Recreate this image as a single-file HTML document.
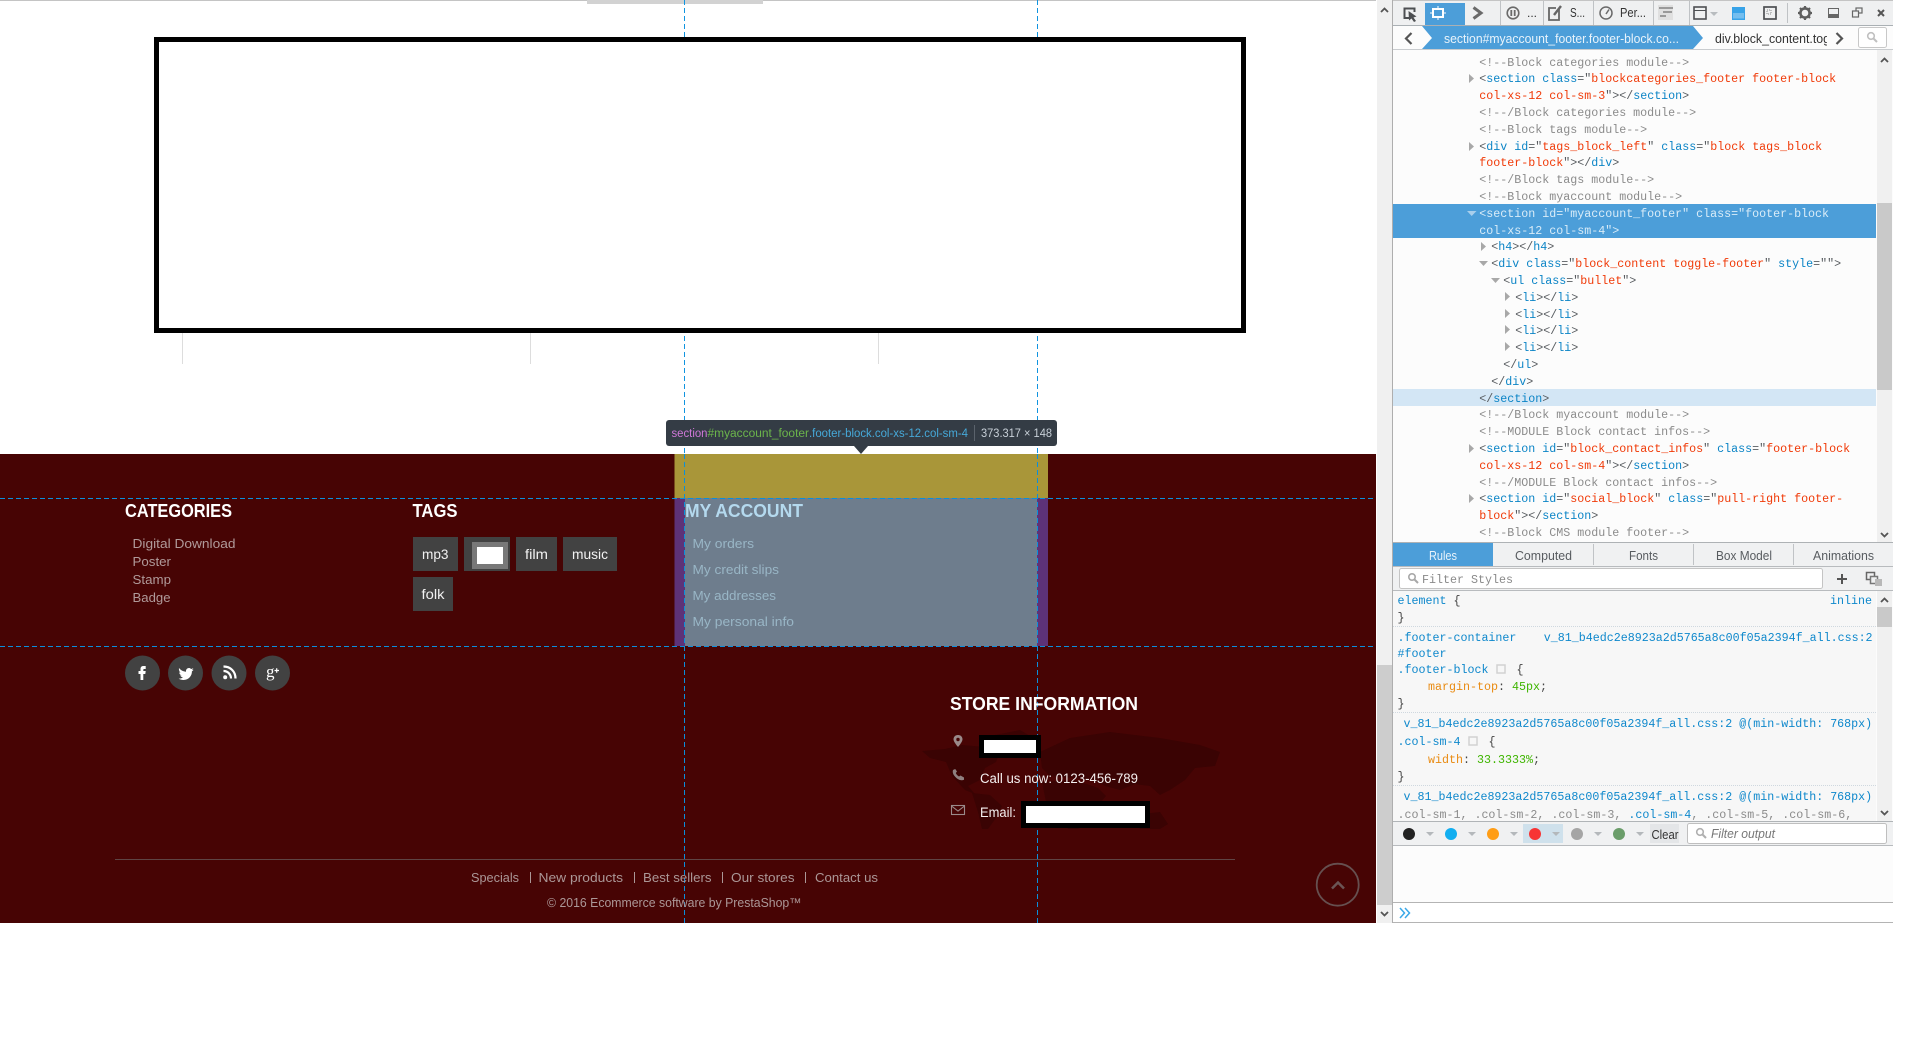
<!DOCTYPE html>
<html><head><meta charset="utf-8"><title>Footer inspect</title>
<style>
html,body{margin:0;padding:0;background:#fff;width:1920px;height:1040px;overflow:hidden}
svg{display:block}
text{white-space:pre}
.s{font-family:"Liberation Sans",sans-serif}
.m{font-family:"Liberation Mono",monospace;font-size:11.67px;fill:#585c60}
.c{fill:#8b8b8b}.t{fill:#0b84c6}.v{fill:#f03a08}.w{fill:#d9ecf8}
.sel{fill:#0e88cc}.p{fill:#e98b12}.g{fill:#3fb500}.d{fill:#444}.h{fill:#909090}
.tab{font-size:12.5px;fill:#585c60}
.cat{font-size:13px;fill:#b09a9a}
.acc{font-size:13px;fill:#99b6c6}
.hd{font-size:18px;font-weight:bold;fill:#fff}
.tag{font-size:13.5px;fill:#f2f2f2}
.foot{font-size:13px;fill:#ab9797}
</style></head><body>
<svg width="1920" height="1040" viewBox="0 0 1920 1040" xmlns="http://www.w3.org/2000/svg">
<defs>
<clipPath id="mk"><rect x="1393" y="50" width="483" height="492"/></clipPath>
<clipPath id="cr"><rect x="1700" y="27" width="127" height="22"/></clipPath>
<clipPath id="ru"><rect x="1393" y="591" width="483" height="230"/></clipPath>
</defs>
<rect width="1920" height="1040" fill="#fff"/>

<!-- PAGE -->
<rect x="0" y="0" width="1376" height="1" fill="#c4c4c4"/>
<rect x="587" y="0" width="176" height="4" fill="#d2d2d2"/>
<g stroke="#ddd" stroke-width="1"><path d="M182.500 333V364M530.500 333V364M878.500 333V364"/></g>
<path d="M684.500 0V454M1037.500 0V454" stroke="#1094e0" stroke-width="1" stroke-dasharray="5 3"/>
<rect x="156.500" y="39.500" width="1087" height="291" fill="#fff" stroke="#000" stroke-width="5"/>

<!-- FOOTER -->
<rect x="0" y="454" width="1376" height="469" fill="#470404"/>
<rect x="674.500" y="454" width="373.500" height="44" fill="#a99639"/>
<rect x="674.500" y="498" width="373.500" height="148" fill="#5d3278"/>
<rect x="685" y="498" width="352" height="148" fill="#6e7d8d"/>

<!-- world map -->
<g fill="#3a0303">
<path d="M922 751L945 749L962 745L985 747L1000 752L996 762L985 768L980 780L968 786L975 794L965 790L952 776L946 762L930 758Z"/>
<path d="M972 793L990 795L1002 806L996 818L988 829L982 829L978 812Z"/>
<path d="M995 735L1020 730L1030 736L1018 748L1004 750Z"/>
<path d="M1040 752L1070 738L1110 732L1160 738L1200 745L1220 752L1215 766L1195 768L1185 780L1170 790L1160 795L1150 786L1135 784L1120 790L1105 786L1098 782L1075 778L1050 776L1042 768Z"/>
<path d="M1042 782L1075 780L1098 788L1106 796L1096 808L1090 822L1078 829L1068 829L1062 810L1046 802Z"/>
<path d="M1135 815L1160 812L1168 824L1160 829L1140 829Z"/>
</g>

<path d="M0 498.500H1376M0 646.500H1376" stroke="#0a8fdc" stroke-width="1" stroke-dasharray="5 3"/>
<path d="M684.500 454V923M1037.500 454V923" stroke="#0a8fdc" stroke-width="1" stroke-dasharray="5 3"/>

<text class="s hd" x="125" y="517" textLength="107" lengthAdjust="spacingAndGlyphs">CATEGORIES</text>
<text class="s cat" x="132.500" y="548" textLength="103" lengthAdjust="spacingAndGlyphs">Digital Download</text>
<text class="s cat" x="132.500" y="566" textLength="38.500" lengthAdjust="spacingAndGlyphs">Poster</text>
<text class="s cat" x="132.500" y="584" textLength="38.500" lengthAdjust="spacingAndGlyphs">Stamp</text>
<text class="s cat" x="132.500" y="602" textLength="38" lengthAdjust="spacingAndGlyphs">Badge</text>

<text class="s hd" x="412.500" y="517" textLength="45" lengthAdjust="spacingAndGlyphs">TAGS</text>
<g fill="#424242">
<rect x="413" y="537" width="45" height="34"/>
<rect x="464" y="537" width="46" height="34"/>
<rect x="516" y="537" width="41" height="34"/>
<rect x="563" y="537" width="54" height="34"/>
<rect x="413" y="577" width="40" height="34"/>
</g>
<rect x="472" y="542" width="36" height="27" fill="#787878"/>
<rect x="477" y="547" width="26" height="17" fill="#fff"/>
<text class="s tag" x="422" y="559" textLength="26.500" lengthAdjust="spacingAndGlyphs">mp3</text>
<text class="s tag" x="525" y="559" textLength="23" lengthAdjust="spacingAndGlyphs">film</text>
<text class="s tag" x="572" y="559" textLength="36" lengthAdjust="spacingAndGlyphs">music</text>
<text class="s tag" x="421.500" y="599" textLength="23" lengthAdjust="spacingAndGlyphs">folk</text>

<text class="s hd" x="685" y="517" textLength="118" lengthAdjust="spacingAndGlyphs" style="fill:#b4d9ee">MY ACCOUNT</text>
<text class="s acc" x="692.500" y="548" textLength="61.500" lengthAdjust="spacingAndGlyphs">My orders</text>
<text class="s acc" x="692.500" y="574" textLength="86.500" lengthAdjust="spacingAndGlyphs">My credit slips</text>
<text class="s acc" x="692.500" y="600" textLength="83.500" lengthAdjust="spacingAndGlyphs">My addresses</text>
<text class="s acc" x="692.500" y="626" textLength="101.500" lengthAdjust="spacingAndGlyphs">My personal info</text>

<!-- social -->
<g fill="#424242">
<circle cx="142.500" cy="673" r="17.500"/><circle cx="185.500" cy="673" r="17.500"/>
<circle cx="229" cy="673" r="17.500"/><circle cx="272.500" cy="673" r="17.500"/>
</g>
<path d="M140.500 680V674H138.500V671H140.500V669C140.500 666.800 141.800 666 143.500 666H145.700V669H144.200C143.400 669 143.300 669.400 143.300 670V671H145.700L145.300 674H143.300V680Z" fill="#fff"/>
<path d="M179 668C181 670.500 183.500 671.500 186 671.700C185.500 668.700 189 666.800 191 669C192 668.800 192.700 668.500 193.300 668.100C193 669 192.500 669.700 191.700 670.200C192.500 670.100 193.100 669.900 193.600 669.700C193.100 670.400 192.500 671 191.900 671.400C192.100 675.500 188.800 680 183.500 680C181.700 680 180 679.500 178.700 678.600C180.300 678.800 181.900 678.300 183 677.400C181.700 677.400 180.600 676.500 180.200 675.300C180.700 675.400 181.200 675.400 181.600 675.200C180.200 674.900 179.200 673.700 179.200 672.200C179.600 672.500 180.100 672.600 180.600 672.600C179.200 671.700 178.700 669.600 179 668Z" fill="#fff"/>
<g fill="none" stroke="#fff" stroke-width="2.200"><path d="M223.500 666.500C230.500 666.500 235.500 671.500 235.500 678.500"/><path d="M223.500 671C227.700 671 231 674.300 231 678.500"/></g>
<circle cx="225.200" cy="677.200" r="2" fill="#fff"/>
<text x="266" y="677" style="font-family:'Liberation Serif',serif;font-size:17px;font-weight:normal;fill:#fff">g</text>
<path d="M274.500 670.500H279M276.700 668.200V672.700" stroke="#fff" stroke-width="1.200"/>

<!-- store -->
<text class="s hd" x="950" y="710" textLength="188" lengthAdjust="spacingAndGlyphs">STORE INFORMATION</text>
<path d="M958 735C955 735 953.500 737.200 953.500 739.300C953.500 742 958 747 958 747C958 747 962.500 742 962.500 739.300C962.500 737.200 961 735 958 735Z" fill="#9a8a8a"/>
<circle cx="958" cy="739.500" r="1.700" fill="#470404"/>
<path d="M953 770C952 773 954 776 957 778.500C959.500 780.300 962 780.700 964 779.800L964 777.500L960.500 775.500L959 776.500C957.500 775.700 956.300 774.400 955.800 773L957 771.500L955.200 769Z" fill="#8f8080"/>
<rect x="951.500" y="805.500" width="13" height="9" fill="none" stroke="#9a8a8a" stroke-width="1.100"/>
<path d="M951.500 806L958 811L964.500 806" fill="none" stroke="#9a8a8a" stroke-width="1.100"/>
<rect x="979" y="735" width="62" height="23" fill="#000"/><rect x="984" y="740" width="52" height="13" fill="#fff"/>
<text class="s" x="980" y="783" textLength="158" lengthAdjust="spacingAndGlyphs" style="font-size:13.500px;fill:#f5f0f0">Call us now: 0123-456-789</text>
<text class="s" x="980" y="817" textLength="36" lengthAdjust="spacingAndGlyphs" style="font-size:13.500px;fill:#f5f0f0">Email:</text>
<rect x="1021" y="801" width="129" height="27" fill="#000"/><rect x="1026" y="806" width="119" height="17" fill="#fff"/>

<!-- bottom -->
<rect x="115" y="859" width="1120" height="1" fill="#5f4444"/>
<text class="s foot" x="471" y="882" textLength="48" lengthAdjust="spacingAndGlyphs">Specials</text>
<text class="s foot" x="538.500" y="882" textLength="84.500" lengthAdjust="spacingAndGlyphs">New products</text>
<text class="s foot" x="643" y="882" textLength="68.500" lengthAdjust="spacingAndGlyphs">Best sellers</text>
<text class="s foot" x="731" y="882" textLength="63.500" lengthAdjust="spacingAndGlyphs">Our stores</text>
<text class="s foot" x="815" y="882" textLength="63" lengthAdjust="spacingAndGlyphs">Contact us</text>
<path d="M530.500 872V883M634.500 872V883M722.500 872V883M805.500 872V883" stroke="#ab9797" stroke-width="1"/>
<text class="s foot" x="547" y="907" textLength="254.500" lengthAdjust="spacingAndGlyphs" style="font-size:12.500px">© 2016 Ecommerce software by PrestaShop™</text>
<circle cx="1337.700" cy="884.700" r="21" fill="none" stroke="#665050" stroke-width="1.800"/>
<path d="M1332 888.500L1338 882.500L1344 888.500" fill="none" stroke="#6b5555" stroke-width="2.500"/>

<!-- tooltip -->
<rect x="666" y="420" width="391" height="26" rx="3" fill="#343c45"/>
<path d="M854 446H868L861 454Z" fill="#343c45"/>
<g class="s" style="font-size:11.500px">
<text x="671.500" y="437" textLength="36" lengthAdjust="spacingAndGlyphs" fill="#cf78d8">section</text>
<text x="707.500" y="437" fill="#6cb54b" textLength="101.500" lengthAdjust="spacingAndGlyphs">#myaccount_footer</text>
<text x="809" y="437" fill="#46a9d9" textLength="159" lengthAdjust="spacingAndGlyphs">.footer-block.col-xs-12.col-sm-4</text>
<text x="981" y="437" fill="#c8d0d8" textLength="71" lengthAdjust="spacingAndGlyphs">373.317 × 148</text>
</g>
<rect x="974" y="425" width="1" height="16" fill="#5b636c"/>

<!-- PAGE SCROLLBAR -->
<rect x="1377" y="0" width="15" height="923" fill="#f0f0f0"/>
<rect x="1377" y="665" width="15" height="240" fill="#cdcdcd"/>
<path d="M1381 12L1384.500 8.500L1388 12" fill="none" stroke="#555" stroke-width="1.800"/>
<path d="M1381 912L1384.500 915.500L1388 912" fill="none" stroke="#555" stroke-width="1.800"/>

<!-- DEVTOOLS -->
<rect x="1393" y="0" width="500" height="923" fill="#fcfcfc"/>
<rect x="1392" y="0" width="1" height="923" fill="#aeaeae"/>

<!-- toolbar -->
<rect x="1393" y="0" width="500" height="25" fill="#eff0f1"/>
<rect x="1393" y="0" width="500" height="1" fill="#c4c4c4"/>
<rect x="1393" y="25" width="500" height="1" fill="#aab0b4"/>
<rect x="1425" y="3" width="40" height="22" fill="#4c9ed9"/>
<g stroke="#bfc2c5" stroke-width="1"><path d="M1500.500 1V25M1543.500 1V25M1593.500 1V25M1653.500 1V25M1689.500 1V25M1787.500 3V23"/></g>
<path d="M1409 18H1404.500V8.500H1414.500V12" fill="none" stroke="#4d4f52" stroke-width="2"/>
<path d="M1408.500 11L1416.500 16.500L1413.500 17.500L1416 21L1414 22L1411.500 18.500L1409 20.500Z" fill="#4d4f52"/>
<rect x="1433" y="9" width="10" height="8" fill="none" stroke="#fff" stroke-width="2"/>
<path d="M1430 13H1433M1443 13H1446M1438 6V9M1438 17V20" stroke="#fff" stroke-width="1"/>
<path d="M1473.500 7.500L1481 13L1473.500 18.500" fill="none" stroke="#6a6a6a" stroke-width="3"/>
<circle cx="1513" cy="13" r="5.800" fill="none" stroke="#6a6a6a" stroke-width="1.600"/>
<path d="M1511.300 10V16M1514.700 10V16" stroke="#6a6a6a" stroke-width="1.800"/>
<text class="s" x="1527" y="17" font-size="12" fill="#333">...</text>
<path d="M1559 9V20H1549V8H1556" fill="none" stroke="#666" stroke-width="1.800"/>
<path d="M1554 15L1561 6" stroke="#666" stroke-width="2.400"/>
<text class="s" x="1570" y="17" font-size="12.500" fill="#333" textLength="15" lengthAdjust="spacingAndGlyphs">S...</text>
<circle cx="1606" cy="13" r="6" fill="none" stroke="#6a6a6a" stroke-width="1.500"/>
<path d="M1606 14L1609 9.500" stroke="#6a6a6a" stroke-width="1.500"/>
<text class="s" x="1620" y="17" font-size="12.500" fill="#333" textLength="26" lengthAdjust="spacingAndGlyphs">Per...</text>
<rect x="1658" y="5" width="15" height="15" fill="#e0e0e0"/>
<path d="M1659 8H1673M1663 12H1672M1660 16H1666" stroke="#9a9a9a" stroke-width="2"/>
<rect x="1694" y="7" width="12" height="12" fill="none" stroke="#4d4f52" stroke-width="1.600"/>
<path d="M1694 10.500H1706" stroke="#4d4f52" stroke-width="1"/>
<path d="M1710 12H1718L1714 16Z" fill="#b8bcbf"/>
<rect x="1732" y="7" width="13" height="13" fill="#38a3e8"/>
<rect x="1733" y="13" width="11" height="5.500" fill="#fff" opacity=".3"/>
<rect x="1764" y="7" width="12" height="12" fill="none" stroke="#4d4f52" stroke-width="1.700"/>
<path d="M1767 10H1771V14H1767Z" fill="none" stroke="#8a8a8a" stroke-width="1" stroke-dasharray="1 1"/>
<circle cx="1805" cy="13" r="4.600" fill="none" stroke="#5e5e5e" stroke-width="2.600"/>
<path d="M1805 6V8.500M1805 17.500V20M1798 13H1800.500M1809.500 13H1812M1800 8L1802 10M1808 16L1810 18M1810 8L1808 10M1802 16L1800 18" stroke="#5e5e5e" stroke-width="2.200"/>
<rect x="1828.500" y="8.500" width="10" height="9" fill="none" stroke="#666" stroke-width="1"/><rect x="1828" y="14" width="11" height="4" fill="#666"/>
<rect x="1856" y="8" width="6" height="5" fill="none" stroke="#666" stroke-width="1.200"/><rect x="1852.500" y="11" width="6" height="6" fill="#eff0f1" stroke="#666" stroke-width="1.200"/>
<path d="M1878 10L1884 16M1884 10L1878 16" stroke="#555" stroke-width="2"/>

<!-- breadcrumbs -->
<rect x="1393" y="26" width="500" height="23" fill="#fcfcfc"/>
<rect x="1393" y="49" width="500" height="1" fill="#c9cccf"/>
<path d="M1411.500 33L1406 38.500L1411.500 44" fill="none" stroke="#555" stroke-width="2.200"/>
<path d="M1422 26H1693L1703 38L1693 49H1422L1432 38Z" fill="#4c9ed9"/>
<text class="s" x="1444" y="43" font-size="13" fill="#e8f3fb" textLength="235" lengthAdjust="spacingAndGlyphs">section#myaccount_footer.footer-block.co...</text>
<g clip-path="url(#cr)"><text class="s" x="1715" y="43" font-size="13" fill="#333" textLength="115" lengthAdjust="spacingAndGlyphs">div.block_content.tog</text></g>
<path d="M1836.500 33L1842 38.500L1836.500 44" fill="none" stroke="#555" stroke-width="2.200"/>
<rect x="1858.500" y="27.500" width="28" height="20" rx="2" fill="#fff" stroke="#c8c8c8"/>
<circle cx="1871" cy="36" r="3.300" fill="none" stroke="#c0c0c0" stroke-width="1.600"/><path d="M1873.500 38.500L1877 42" stroke="#c0c0c0" stroke-width="2"/>

<!-- markup -->
<rect x="1393" y="204" width="483" height="34" fill="#4c9ed9"/>
<rect x="1393" y="389" width="483" height="17" fill="#d3e6f5"/>
<g clip-path="url(#mk)">
<text class="m c" x="1479.300" y="66">&lt;!--Block categories module--&gt;</text>
<text class="m" x="1479.300" y="82">&lt;<tspan class="t">section</tspan> <tspan class="t">class</tspan>="<tspan class="v">blockcategories_footer footer-block</tspan></text>
<text class="m" x="1479.300" y="99"><tspan class="v">col-xs-12 col-sm-3</tspan>"&gt;&lt;/<tspan class="t">section</tspan>&gt;</text>
<text class="m c" x="1479.300" y="116">&lt;!--/Block categories module--&gt;</text>
<text class="m c" x="1479.300" y="133">&lt;!--Block tags module--&gt;</text>
<text class="m" x="1479.300" y="150">&lt;<tspan class="t">div</tspan> <tspan class="t">id</tspan>="<tspan class="v">tags_block_left</tspan>" <tspan class="t">class</tspan>="<tspan class="v">block tags_block</tspan></text>
<text class="m" x="1479.300" y="166"><tspan class="v">footer-block</tspan>"&gt;&lt;/<tspan class="t">div</tspan>&gt;</text>
<text class="m c" x="1479.300" y="183">&lt;!--/Block tags module--&gt;</text>
<text class="m c" x="1479.300" y="200">&lt;!--Block myaccount module--&gt;</text>
<text class="m w" x="1479.300" y="217">&lt;section id="myaccount_footer" class="footer-block</text>
<text class="m w" x="1479.300" y="234">col-xs-12 col-sm-4"&gt;</text>
<text class="m" x="1491.300" y="250">&lt;<tspan class="t">h4</tspan>&gt;&lt;/<tspan class="t">h4</tspan>&gt;</text>
<text class="m" x="1491.300" y="267">&lt;<tspan class="t">div</tspan> <tspan class="t">class</tspan>="<tspan class="v">block_content toggle-footer</tspan>" <tspan class="t">style</tspan>=""&gt;</text>
<text class="m" x="1503.300" y="284">&lt;<tspan class="t">ul</tspan> <tspan class="t">class</tspan>="<tspan class="v">bullet</tspan>"&gt;</text>
<text class="m" x="1515.300" y="301">&lt;<tspan class="t">li</tspan>&gt;&lt;/<tspan class="t">li</tspan>&gt;</text>
<text class="m" x="1515.300" y="318">&lt;<tspan class="t">li</tspan>&gt;&lt;/<tspan class="t">li</tspan>&gt;</text>
<text class="m" x="1515.300" y="334">&lt;<tspan class="t">li</tspan>&gt;&lt;/<tspan class="t">li</tspan>&gt;</text>
<text class="m" x="1515.300" y="351">&lt;<tspan class="t">li</tspan>&gt;&lt;/<tspan class="t">li</tspan>&gt;</text>
<text class="m" x="1503.300" y="368">&lt;/<tspan class="t">ul</tspan>&gt;</text>
<text class="m" x="1491.300" y="385">&lt;/<tspan class="t">div</tspan>&gt;</text>
<text class="m" x="1479.300" y="402">&lt;/<tspan class="t">section</tspan>&gt;</text>
<text class="m c" x="1479.300" y="418">&lt;!--/Block myaccount module--&gt;</text>
<text class="m c" x="1479.300" y="435">&lt;!--MODULE Block contact infos--&gt;</text>
<text class="m" x="1479.300" y="452">&lt;<tspan class="t">section</tspan> <tspan class="t">id</tspan>="<tspan class="v">block_contact_infos</tspan>" <tspan class="t">class</tspan>="<tspan class="v">footer-block</tspan></text>
<text class="m" x="1479.300" y="469"><tspan class="v">col-xs-12 col-sm-4</tspan>"&gt;&lt;/<tspan class="t">section</tspan>&gt;</text>
<text class="m c" x="1479.300" y="486">&lt;!--/MODULE Block contact infos--&gt;</text>
<text class="m" x="1479.300" y="502">&lt;<tspan class="t">section</tspan> <tspan class="t">id</tspan>="<tspan class="v">social_block</tspan>" <tspan class="t">class</tspan>="<tspan class="v">pull-right footer-</tspan></text>
<text class="m" x="1479.300" y="519"><tspan class="v">block</tspan>"&gt;&lt;/<tspan class="t">section</tspan>&gt;</text>
<text class="m c" x="1479.300" y="536">&lt;!--Block CMS module footer--&gt;</text>
</g>
<g fill="#a8a8a8">
<path d="M1469 74V83L1474 78.500Z"/><path d="M1469 142V151L1474 146.500Z"/>
<path d="M1481 242V251L1486 246.500Z"/>
<path d="M1505 292V301L1510 296.500Z"/><path d="M1505 309V318L1510 313.500Z"/><path d="M1505 325V334L1510 329.500Z"/><path d="M1505 342V351L1510 346.500Z"/>
<path d="M1469 444V453L1474 448.500Z"/><path d="M1469 494V503L1474 498.500Z"/>
<path d="M1479 261H1488L1483.500 266Z"/><path d="M1491 278H1500L1495.500 283Z"/>
</g>
<path d="M1467 211H1476.500L1471.700 216Z" fill="#a9cfec"/>
<rect x="1877" y="50" width="15" height="492" fill="#f0f0f0"/>
<rect x="1877" y="203" width="15" height="187" fill="#c9c9c9"/>
<path d="M1881 62L1884.500 58.500L1888 62" fill="none" stroke="#555" stroke-width="1.800"/>
<path d="M1881 533L1884.500 536.500L1888 533" fill="none" stroke="#555" stroke-width="1.800"/>

<!-- tabs -->
<rect x="1393" y="542" width="500" height="24" fill="#f0f1f2"/>
<rect x="1393" y="542" width="500" height="1" fill="#aeb2b5"/>
<rect x="1393" y="566" width="500" height="1" fill="#b8bbbe"/>
<rect x="1393" y="543" width="100" height="23" fill="#4c9ed9"/>
<path d="M1593.500 544V565M1693.500 544V565M1793.500 544V565" stroke="#c0c3c6"/>
<text class="s tab" x="1429" y="560" textLength="28" lengthAdjust="spacingAndGlyphs" style="fill:#e8f3fb">Rules</text>
<text class="s tab" x="1515" y="560" textLength="57" lengthAdjust="spacingAndGlyphs">Computed</text>
<text class="s tab" x="1629" y="560" textLength="29" lengthAdjust="spacingAndGlyphs">Fonts</text>
<text class="s tab" x="1716" y="560" textLength="56" lengthAdjust="spacingAndGlyphs">Box Model</text>
<text class="s tab" x="1813" y="560" textLength="61" lengthAdjust="spacingAndGlyphs">Animations</text>

<!-- filter row -->
<rect x="1393" y="567" width="500" height="24" fill="#f0f1f2"/>
<rect x="1393" y="590" width="500" height="1" fill="#b8bbbe"/>
<rect x="1399.500" y="568.500" width="423" height="20" rx="2" fill="#fff" stroke="#c4c4c4"/>
<circle cx="1412" cy="577" r="3.200" fill="none" stroke="#a8a8a8" stroke-width="1.600"/><path d="M1414.500 579.500L1418 583" stroke="#a8a8a8" stroke-width="2"/>
<text class="m" x="1422" y="583" style="fill:#8a8a8a">Filter Styles</text>
<path d="M1837 579H1847M1842 574V584" stroke="#555" stroke-width="2"/>
<rect x="1866.500" y="572.500" width="8" height="7" fill="none" stroke="#666" stroke-width="1.500"/>
<rect x="1870.500" y="576.500" width="7" height="7" fill="#eff0f1" stroke="#777" stroke-width="1.500"/>
<rect x="1875" y="579" width="7" height="7" fill="#b8b8b8"/>

<!-- rules -->
<rect x="1393" y="591" width="483" height="230" fill="#f7f7f7"/>
<path d="M1393 626.500H1876M1393 712.500H1876M1393 785.500H1876" stroke="#cfd8df" stroke-dasharray="1 1"/>
<g clip-path="url(#ru)">
<text class="m sel" x="1397.500" y="604">element <tspan class="d">{</tspan></text>
<text class="m sel" x="1830" y="604">inline</text>
<text class="m d" x="1397.500" y="621">}</text>
<text class="m sel" x="1397.500" y="641">.footer-container</text>
<text class="m sel" x="1543.800" y="641">v_81_b4edc2e8923a2d5765a8c00f05a2394f_all.css:2</text>
<text class="m sel" x="1397.500" y="657">#footer</text>
<text class="m sel" x="1397.500" y="673">.footer-block</text>
<text class="m d" x="1516.500" y="673">{</text>
<text class="m" x="1428" y="690"><tspan class="p">margin-top</tspan><tspan class="d">: </tspan><tspan class="g">45px</tspan><tspan class="d">;</tspan></text>
<text class="m d" x="1397.500" y="707">}</text>
<text class="m sel" x="1403.500" y="727">v_81_b4edc2e8923a2d5765a8c00f05a2394f_all.css:2 @(min-width: 768px)</text>
<text class="m sel" x="1397.500" y="745">.col-sm-4</text>
<text class="m d" x="1488.500" y="745">{</text>
<text class="m" x="1428" y="763"><tspan class="p">width</tspan><tspan class="d">: </tspan><tspan class="g">33.3333%</tspan><tspan class="d">;</tspan></text>
<text class="m d" x="1397.500" y="780">}</text>
<text class="m sel" x="1403.500" y="800">v_81_b4edc2e8923a2d5765a8c00f05a2394f_all.css:2 @(min-width: 768px)</text>
<text class="m" x="1397.500" y="818" style="fill:#8b8b8b">.col-sm-1, .col-sm-2, .col-sm-3, <tspan class="sel">.col-sm-4</tspan>, .col-sm-5, .col-sm-6,</text>
</g>
<g fill="none" stroke="#d2d2d2" stroke-width="1.500"><rect x="1497" y="665" width="8" height="8"/><rect x="1469" y="737" width="8" height="8"/></g>
<rect x="1877" y="591" width="15" height="230" fill="#f0f0f0"/>
<rect x="1877" y="607" width="15" height="20" fill="#c9c9c9"/>
<path d="M1881 602L1884.500 598.500L1888 602" fill="none" stroke="#555" stroke-width="1.800"/>
<path d="M1881 811L1884.500 814.500L1888 811" fill="none" stroke="#555" stroke-width="1.800"/>

<!-- console -->
<rect x="1393" y="821" width="500" height="24" fill="#f0f1f2"/>
<rect x="1393" y="821" width="500" height="1" fill="#b0b4b7"/>
<rect x="1393" y="845" width="500" height="1" fill="#b8bbbe"/>
<rect x="1523" y="824" width="40" height="19" fill="#cfe1ec"/>
<circle cx="1409" cy="834" r="6" fill="#222"/>
<circle cx="1451" cy="834" r="6" fill="#12aef0"/>
<circle cx="1493" cy="834" r="6" fill="#ff9d16"/>
<circle cx="1535" cy="834" r="6" fill="#f73434"/>
<circle cx="1577" cy="834" r="6" fill="#a5a5a5"/>
<circle cx="1619" cy="834" r="6" fill="#6a9d6a"/>
<g fill="#b4b8bb">
<path d="M1426 832H1434L1430 836Z"/><path d="M1468 832H1476L1472 836Z"/><path d="M1510 832H1518L1514 836Z"/><path d="M1552 832H1560L1556 836Z"/><path d="M1594 832H1602L1598 836Z"/><path d="M1636 832H1644L1640 836Z"/>
</g>
<rect x="1650" y="824" width="29" height="19" fill="#e4e6e8"/>
<text class="s" x="1651.500" y="839" font-size="13" fill="#333" textLength="27" lengthAdjust="spacingAndGlyphs">Clear</text>
<rect x="1687.500" y="823.500" width="199" height="20" rx="2" fill="#fff" stroke="#bfbfbf"/>
<circle cx="1700" cy="832" r="3.300" fill="none" stroke="#b0b0b0" stroke-width="1.600"/><path d="M1702.500 834.500L1706 838" stroke="#b0b0b0" stroke-width="2"/>
<text class="s" x="1711" y="838" font-size="12.500" font-style="italic" fill="#777" textLength="64" lengthAdjust="spacingAndGlyphs">Filter output</text>
<rect x="1393" y="902" width="500" height="1" fill="#b4b4b4"/>
<rect x="1393" y="903" width="500" height="19" fill="#fff"/>
<rect x="1393" y="922" width="500" height="1" fill="#b4b4b4"/>
<path d="M1400 908L1404.500 913L1400 918M1405 908L1409.500 913L1405 918" fill="none" stroke="#3aa8e8" stroke-width="1.500"/>
</svg>
</body></html>
